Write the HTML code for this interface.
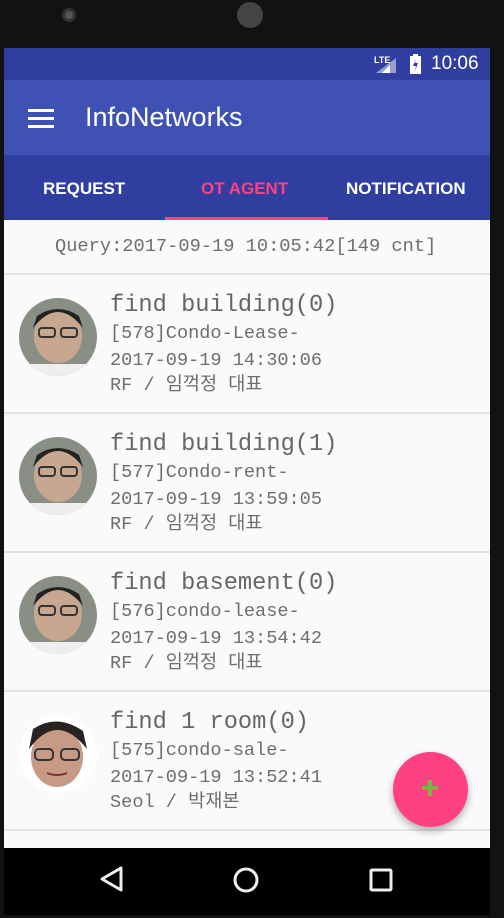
<!DOCTYPE html>
<html><head><meta charset="utf-8"><style>
*{margin:0;padding:0;box-sizing:border-box}
body{width:504px;height:918px;background:#121212;position:relative;overflow:hidden;font-family:"Liberation Sans","Noto Sans CJK KR",sans-serif}
.abs{position:absolute}
.screen{left:4px;top:48px;width:486px;height:800px;background:#fafafa;overflow:hidden}
.mono{font-family:"Liberation Mono","Noto Sans CJK KR",monospace;color:#6e6e6e;line-height:1.15;white-space:nowrap}
.item{position:absolute;left:0;width:486px;height:139px;border-bottom:2px solid #e4e4e4}
.av{position:absolute;left:15px;top:23px;width:78px;height:78px;border-radius:50%;background:#fff;overflow:hidden}
.t{position:absolute;left:106px;top:17px;font-size:23.7px;color:#666}
.l{position:absolute;left:106px;font-size:18.6px}
</style></head><body>
<div class="abs" style="left:62px;top:8px;width:14px;height:14px;border-radius:50%;background:#555;border:3px solid #333"></div>
<div class="abs" style="left:237px;top:2px;width:26px;height:26px;border-radius:50%;background:#444"></div>
<div class="abs screen">
 <div class="abs" style="left:0;top:0;width:486px;height:32px;background:#303f9f"></div>
 <svg class="abs" style="left:370px;top:6px" width="26" height="20"><text x="0" y="9" font-size="9" fill="#fff" font-family="Liberation Sans" font-weight="bold">LTE</text><polygon points="2,19 22,19 22,4" fill="#fff" opacity=".5"/><polygon points="8,19 16,19 16,11" fill="#fff"/></svg>
 <svg class="abs" style="left:404px;top:5px" width="14" height="22"><rect x="2" y="3" width="11" height="18" fill="#fff"/><rect x="5" y="1" width="5" height="3" fill="#fff"/><path d="M8 6 L5 13 H8 L7 18 L10 10 H7 Z" fill="#303f9f"/></svg>
 <div class="abs" style="left:427px;top:5px;color:#fff;font-size:19px">10:06</div>
 <div class="abs" style="left:0;top:32px;width:486px;height:75px;background:#3f51b5"></div>
 <div class="abs" style="left:24px;top:61px;width:26px;height:3px;background:#fff;box-shadow:0 8px 0 #fff,0 16px 0 #fff"></div>
 <div class="abs" style="left:81px;top:54px;color:#fff;font-size:27px">InfoNetworks</div>
 <div class="abs" style="left:0;top:107px;width:486px;height:65px;background:#303f9f"></div>
 <div class="abs" style="left:39px;top:131px;color:#fff;font-size:17px;font-weight:bold">REQUEST</div>
 <div class="abs" style="left:197px;top:131px;color:#ff4081;font-size:17px;font-weight:bold">OT AGENT</div>
 <div class="abs" style="left:342px;top:131px;color:#fff;font-size:17px;font-weight:bold">NOTIFICATION</div>
 <div class="abs" style="left:161px;top:169px;width:163px;height:3px;background:#ff4081"></div>
 <div class="abs mono" style="left:51px;top:188px;font-size:18.7px">Query:2017-09-19 10:05:42[149 cnt]</div>
 <div class="abs" style="left:0;top:225px;width:486px;height:2px;background:#e4e4e4"></div>

 <div class="item" style="top:227px"><div class="av"><svg width="78" height="78"><rect width="78" height="78" fill="#8a8f86"/><ellipse cx="39" cy="38" rx="24" ry="27" fill="#c7a78f"/><path d="M14 30 Q39 -2 64 30 L60 18 Q39 4 18 18Z" fill="#222"/><rect x="20" y="30" width="16" height="9" rx="3" fill="none" stroke="#333" stroke-width="2"/><rect x="42" y="30" width="16" height="9" rx="3" fill="none" stroke="#333" stroke-width="2"/><rect x="10" y="66" width="58" height="12" fill="#eee"/></svg></div>
  <div class="t mono">find building(0)</div><div class="l mono" style="top:48px">[578]Condo-Lease-</div><div class="l mono" style="top:75px">2017-09-19 14:30:06</div><div class="l mono" style="top:100px">RF / 임꺽정 대표</div></div>
 <div class="item" style="top:366px"><div class="av"><svg width="78" height="78"><rect width="78" height="78" fill="#8a8f86"/><ellipse cx="39" cy="38" rx="24" ry="27" fill="#c7a78f"/><path d="M14 30 Q39 -2 64 30 L60 18 Q39 4 18 18Z" fill="#222"/><rect x="20" y="30" width="16" height="9" rx="3" fill="none" stroke="#333" stroke-width="2"/><rect x="42" y="30" width="16" height="9" rx="3" fill="none" stroke="#333" stroke-width="2"/><rect x="10" y="66" width="58" height="12" fill="#eee"/></svg></div>
  <div class="t mono">find building(1)</div><div class="l mono" style="top:48px">[577]Condo-rent-</div><div class="l mono" style="top:75px">2017-09-19 13:59:05</div><div class="l mono" style="top:100px">RF / 임꺽정 대표</div></div>
 <div class="item" style="top:505px"><div class="av"><svg width="78" height="78"><rect width="78" height="78" fill="#8a8f86"/><ellipse cx="39" cy="38" rx="24" ry="27" fill="#c7a78f"/><path d="M14 30 Q39 -2 64 30 L60 18 Q39 4 18 18Z" fill="#222"/><rect x="20" y="30" width="16" height="9" rx="3" fill="none" stroke="#333" stroke-width="2"/><rect x="42" y="30" width="16" height="9" rx="3" fill="none" stroke="#333" stroke-width="2"/><rect x="10" y="66" width="58" height="12" fill="#eee"/></svg></div>
  <div class="t mono">find basement(0)</div><div class="l mono" style="top:48px">[576]condo-lease-</div><div class="l mono" style="top:75px">2017-09-19 13:54:42</div><div class="l mono" style="top:100px">RF / 임꺽정 대표</div></div>
 <div class="item" style="top:644px"><div class="av"><svg width="78" height="78"><rect width="78" height="78" fill="#fff"/><ellipse cx="38" cy="42" rx="26" ry="30" fill="#c79a85"/><path d="M10 34 Q38 -4 68 34 L64 16 Q38 -2 14 14Z" fill="#2a2220"/><rect x="16" y="34" width="18" height="11" rx="4" fill="none" stroke="#333" stroke-width="2"/><rect x="42" y="34" width="18" height="11" rx="4" fill="none" stroke="#333" stroke-width="2"/><path d="M28 58 Q38 62 48 58" stroke="#733" stroke-width="2" fill="none"/></svg></div>
  <div class="t mono">find 1 room(0)</div><div class="l mono" style="top:48px">[575]condo-sale-</div><div class="l mono" style="top:75px">2017-09-19 13:52:41</div><div class="l mono" style="top:100px">Seol / 박재본</div></div>
 <div class="abs" style="left:389px;top:704px;width:75px;height:75px;border-radius:50%;background:#ff4081;box-shadow:0 4px 8px rgba(0,0,0,.3)"></div>
 <div class="abs" style="left:418px;top:738px;width:16px;height:4px;background:#7cb342"></div>
 <div class="abs" style="left:424px;top:732px;width:4px;height:16px;background:#7cb342"></div>
</div>
<div class="abs" style="left:4px;top:848px;width:486px;height:67px;background:#000"></div>
<svg class="abs" style="left:0;top:848px" width="504" height="67"><path d="M121 20 L121 42 L102 31 Z" fill="none" stroke="#eee" stroke-width="3" stroke-linejoin="round"/><circle cx="246" cy="32" r="11" fill="none" stroke="#eee" stroke-width="3"/><rect x="371" y="22" width="20" height="20" rx="1" fill="none" stroke="#eee" stroke-width="3"/></svg>
</body></html>
